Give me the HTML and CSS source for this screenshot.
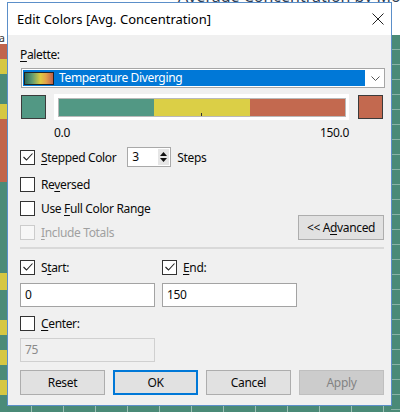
FILE: index.html
```html
<!DOCTYPE html>
<html>
<head>
<meta charset="utf-8">
<link rel="stylesheet" href="styles.css">
</head>
<body>
<div class="desk">
  <span class="sheet-title">Average Concentration by Month</span>
  <span class="row-label">Ja</span>
  <div class="dialog">
    <div class="titlebar">
      <span class="title">Edit Colors [Avg. Concentration]</span>
      <svg class="close" width="12" height="12" viewBox="0 0 12 12"><path d="M0.5 0.5 L11.5 11.5 M11.5 0.5 L0.5 11.5" stroke="#222" stroke-width="1" fill="none"/></svg>
    </div>
    <div class="content">
      <div class="label-row"><span><u>P</u>alette:</span></div>
      <div class="select">
        <div class="select-value">
          <span class="grad"></span>
          <span class="select-text">Temperature Diverging</span>
        </div>
        <svg class="chev" width="9" height="5" viewBox="0 0 9 5"><path d="M0.5 0.5 L4.5 4.5 L8.5 0.5" stroke="#555" fill="none"/></svg>
      </div>
      <div class="bar-row">
        <span class="swatch green"></span>
        <div class="bar-frame">
          <div class="bar">
            <span class="seg green"></span>
            <span class="seg yellow"><i class="tick"></i></span>
            <span class="seg red"></span>
          </div>
        </div>
        <span class="swatch red"></span>
      </div>
      <div class="range-row"><span>0.0</span><span>150.0</span></div>

      <div class="check-row stepped">
        <span class="box checked"><svg width="12" height="12" viewBox="0 0 12 12"><path d="M1.5 6 L4.5 9 L10.5 2.5" stroke="#222" stroke-width="1.1" fill="none"/></svg></span>
        <span class="lbl"><u>S</u>tepped Color</span>
        <div class="spin">
          <span class="spin-val">3</span>
          <span class="spin-btns">
            <svg width="7" height="4" viewBox="0 0 7 4"><path d="M0 4 L3.5 0 L7 4 Z" fill="#111"/></svg>
            <svg width="7" height="4" viewBox="0 0 7 4"><path d="M0 0 L3.5 4 L7 0 Z" fill="#111"/></svg>
          </span>
        </div>
        <span class="lbl">Steps</span>
      </div>
      <div class="check-row">
        <span class="box"></span>
        <span class="lbl">Re<u>v</u>ersed</span>
      </div>
      <div class="check-row">
        <span class="box"></span>
        <span class="lbl">Use <u>F</u>ull Color Range</span>
      </div>
      <div class="check-row include">
        <span class="box disabled"></span>
        <span class="lbl dim"><u>I</u>nclude Totals</span>
        <button class="btn advanced">&lt;&lt; A<u>d</u>vanced</button>
      </div>
      <div class="sep"></div>

      <div class="pair">
        <div class="check-row">
          <span class="box checked"><svg width="12" height="12" viewBox="0 0 12 12"><path d="M1.5 6 L4.5 9 L10.5 2.5" stroke="#222" stroke-width="1.1" fill="none"/></svg></span>
          <span class="lbl">S<u>t</u>art:</span>
        </div>
        <div class="check-row">
          <span class="box checked"><svg width="12" height="12" viewBox="0 0 12 12"><path d="M1.5 6 L4.5 9 L10.5 2.5" stroke="#222" stroke-width="1.1" fill="none"/></svg></span>
          <span class="lbl"><u>E</u>nd:</span>
        </div>
      </div>
      <div class="pair inputs">
        <div class="input">0</div>
        <div class="input">150</div>
      </div>
      <div class="check-row center-row">
        <span class="box"></span>
        <span class="lbl"><u>C</u>enter:</span>
      </div>
      <div class="pair inputs second">
        <div class="input disabled">75</div>
      </div>

      <div class="buttons">
        <button class="btn">Reset</button>
        <button class="btn default">OK</button>
        <button class="btn">Cancel</button>
        <button class="btn off">Apply</button>
      </div>
    </div>
  </div>
</div>
</body>
</html>
```
FILE: styles.css
```css
* { box-sizing: border-box; }
html, body { margin: 0; padding: 0; }
body {
  font-family: "Noto Sans", "Open Sans", sans-serif;
  font-size: 12px;
  letter-spacing: -0.35px;
  color: #0a0a0a;
}
.desk {
  position: relative;
  width: 400px;
  height: 412px;
  overflow: hidden;
  background:
    linear-gradient(to bottom,
      #fff 0 44px,
      #c1654c 44px 59px, #d6c743 59px 74px, #4b8b78 74px 89px, #4b8b78 89px 104px,
      #d6c743 104px 119px, #c1654c 119px 182px, #4b8b78 182px 273px,
      #d6c743 273px 290px, #4b8b78 290px 320px, #d6c743 320px 335px,
      #4b8b78 335px 350px, #d6c743 350px 365px, #4b8b78 365px 380px,
      #d6c743 380px 395px, #4b8b78 395px 412px) 0 0 / 7px 412px no-repeat,
    repeating-linear-gradient(to bottom, transparent 0 14px, rgba(255,255,255,0.35) 14px 15px) 0 44px / 7px 368px no-repeat,
    repeating-linear-gradient(to bottom, transparent 0 14px, rgba(255,255,255,0.35) 14px 15px) 391px 35px / 9px 377px no-repeat,
    repeating-linear-gradient(to right, transparent 0 31px, rgba(255,255,255,0.45) 31px 32px) 0 405px / 400px 7px no-repeat,
    linear-gradient(#fff, #fff) 0 0 / 400px 35px no-repeat,
    #4a8a77;
}
.sheet-title {
  position: absolute;
  z-index: 0;
  left: 178px;
  top: -12px;
  font-size: 16px;
  line-height: 16px;
  letter-spacing: 0;
  color: #2d3d55;
  white-space: nowrap;
}
.row-label {
  position: absolute;
  z-index: 0;
  left: -4px;
  top: 30px;
  font-size: 11px;
  color: #333;
}
.dialog {
  position: absolute;
  z-index: 2;
  left: 7px;
  top: 2px;
  width: 385px;
  height: 404px;
  border: 1px solid #5b8fc9;
  background: #f0f0f0;
  display: flex;
  flex-direction: column;
}
.titlebar {
  height: 32px;
  flex: none;
  background: #fff;
  display: flex;
  align-items: center;
  justify-content: space-between;
  padding: 0 7px 1px 9px;
}
.title { font-size: 13px; letter-spacing: 0; color: #000; }
.close { margin-top: 1px; }
.content {
  padding: 0 6px 0 12px;
  display: flex;
  flex-direction: column;
}
u { text-decoration: underline; text-underline-offset: 2px; text-decoration-thickness: 1px; }
.label-row { height: 16px; line-height: 16px; margin-top: 12px; }
.select {
  margin-top: 5px;
  margin-left: 1px;
  height: 20px;
  border: 1px solid #a6a6a6;
  background: #fff;
  display: flex;
  align-items: center;
  padding: 1px;
}
.select-value {
  flex: 1;
  height: 16px;
  background: #0078d7;
  display: flex;
  align-items: center;
  padding-left: 1px;
}
.grad {
  width: 30px;
  height: 13px;
  border: 1px solid #222;
  background: linear-gradient(to right, #2f6a58, #5e9a73 25%, #dccb41 55%, #e3a24a 75%, #c0604b);
}
.select-text { color: #fff; margin-left: 5px; line-height: 16px; }
.chev { margin: 0 3px 0 6px; }
.bar-row {
  margin-top: 6px;
  height: 26px;
  display: flex;
  align-items: center;
}
.swatch {
  width: 25px;
  height: 24px;
  margin-left: 1px;
  border: 1px solid #3b3b3b;
}
.swatch.green { background: #529884; }
.swatch.red { background: #c3694f; margin-left: 9px; }
.bar-frame {
  margin-left: 8px;
  width: 295px;
  height: 26px;
  background: #fff;
  padding: 4px 3px 3px 4px;
}
.bar {
  height: 19px;
  display: flex;
  border: 1px solid #b9b9b9;
}
.seg { flex: 1; position: relative; }
.seg.green { background: #529884; }
.seg.yellow { background: #dbcf46; }
.seg.red { background: #c3694f; }
.tick {
  position: absolute;
  left: 47px;
  bottom: 0;
  width: 1px;
  height: 3px;
  background: #333;
}
.range-row {
  margin-top: 5px;
  height: 16px;
  line-height: 16px;
  display: flex;
  justify-content: space-between;
  width: 329px;
  padding-left: 34px;
}
.check-row {
  height: 24px;
  display: flex;
  align-items: center;
}
.check-row.stepped { margin-top: 4px; margin-bottom: 3px; }
.box {
  width: 15px;
  height: 15px;
  border: 1px solid #333;
  background: #fff;
  flex: none;
  display: flex;
  align-items: center;
  justify-content: center;
}
.box.disabled { border-color: #cccccc; background: #f7f7f7; }
.lbl { margin-left: 6px; white-space: nowrap; }
.dim { color: #a0a0a0; }
.spin {
  margin-left: 11px;
  width: 44px;
  height: 20px;
  border: 1px solid #a9a9a9;
  background: #fff;
  display: flex;
  align-items: stretch;
}
.spin-val { flex: 1; padding-left: 4px; line-height: 18px; }
.spin-btns {
  width: 11px;
  margin: 1px;
  background: #e6e6e6;
  display: flex;
  flex-direction: column;
  align-items: center;
  justify-content: center;
  gap: 2px;
}
.btn {
  font-family: inherit;
  font-size: 12px;
  letter-spacing: -0.35px;
  color: #0a0a0a;
  background: #e1e1e1;
  border: 1px solid #adadad;
  height: 25px;
  padding: 0;
  margin: 0;
}
.advanced {
  margin-left: auto;
  margin-right: 1px;
  width: 86px;
  align-self: flex-start;
  margin-top: -5px;
}
.sep {
  margin-top: 3px;
  height: 2px;
  width: 364px;
  background: #d9d9d9;
}
.pair {
  display: grid;
  grid-template-columns: 135px 135px;
  column-gap: 7px;
  margin-top: 6px;
}
.pair.inputs { margin-top: 4px; }
.pair.inputs.second { margin-top: 3px; }
.center-row { margin-top: 4px; }
.input {
  height: 24px;
  border: 1px solid #a3a3a3;
  background: #fff;
  padding-left: 4px;
  line-height: 22px;
}
.input.disabled { border-color: #d0d0d0; background: #f0f0f0; color: #8a8a8a; }
.buttons {
  margin-top: 8px;
  display: grid;
  grid-template-columns: repeat(4, 85px);
  column-gap: 8px;
}
.btn.default { border-color: #0078d7; box-shadow: inset 0 0 0 1px #0078d7; }
.btn.off { background: #cccccc; border-color: #bfbfbf; color: #838383; }
```
